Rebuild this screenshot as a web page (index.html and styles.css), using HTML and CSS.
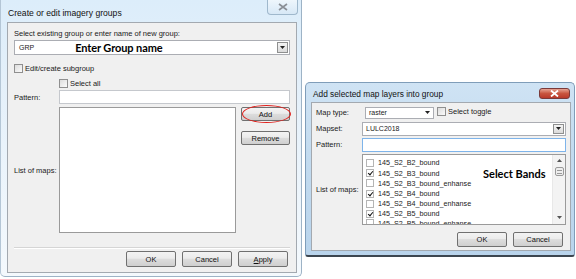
FILE: index.html
```html
<!DOCTYPE html>
<html lang="en">
<head>
    <title>Imagery groups</title>
    <meta charset="utf-8">
    <link rel="stylesheet" href="styles.css">
</head>
<body>
<div class="desk">
    <section class="win win-main">
        <div class="titlebar">
            <span class="title">Create or edit imagery groups</span>
            <span class="close close-idle">
                <svg width="10" height="8" viewBox="0 0 10 8"><path d="M1 1 L9 7 M9 1 L1 7" stroke="#8a8f96" stroke-width="1.6"/></svg>
            </span>
        </div>
        <div class="panel panel-main">
            <div class="lbl-top">Select existing group or enter name of new group:</div>
            <div class="combo combo-group">
                <span class="val">GRP</span>
                <span class="note note-group">Enter Group name</span>
                <span class="drop"><svg width="5" height="3" viewBox="0 0 5 3"><path d="M0 0 H5 L2.5 3 Z" fill="#222"/></svg></span>
            </div>
            <div class="check-row row-sub"><span class="box"></span>Edit/create subgroup</div>
            <div class="check-row row-all"><span class="box"></span>Select all</div>
            <div class="form-grid">
                <span class="lbl">Pattern:</span>
                <div class="input input-wide"></div>
                <span class="lbl lbl-list">List of maps:</span>
                <div class="listbox"></div>
                <div class="side-btns">
                    <div class="btn-wrap">
                        <button class="btn">Add</button>
                        <span class="ring"></span>
                    </div>
                    <button class="btn">Remove</button>
                </div>
            </div>
            <div class="sep"></div>
            <div class="btn-row">
                <button class="btn btn-foot">OK</button>
                <button class="btn btn-foot">Cancel</button>
                <button class="btn btn-foot"><u>A</u>pply</button>
            </div>
        </div>
    </section>

    <section class="win win-add">
        <div class="titlebar titlebar-add">
            <span class="title">Add selected map layers into group</span>
            <span class="close close-red">
                <svg width="9" height="7" viewBox="0 0 9 7"><path d="M1 0.5 L8 6.5 M8 0.5 L1 6.5" stroke="#fff" stroke-width="1.8"/></svg>
            </span>
        </div>
        <div class="panel panel-add">
            <div class="add-row row-type">
                <span class="lbl">Map type:</span>
                <div class="combo combo-type">
                    <span class="val">raster</span>
                    <span class="drop-plain"><svg width="5" height="3" viewBox="0 0 5 3"><path d="M0 0 H5 L2.5 3 Z" fill="#222"/></svg></span>
                </div>
                <div class="check-row"><span class="box"></span>Select toggle</div>
            </div>
            <div class="add-row row-mapset">
                <span class="lbl">Mapset:</span>
                <div class="combo combo-mapset">
                    <span class="val">LULC2018</span>
                    <span class="drop"><svg width="5" height="3" viewBox="0 0 5 3"><path d="M0 0 H5 L2.5 3 Z" fill="#222"/></svg></span>
                </div>
            </div>
            <div class="add-row row-pattern">
                <span class="lbl">Pattern:</span>
                <div class="input input-focus"></div>
            </div>
            <div class="add-row row-list">
                <span class="lbl lbl-list">List of maps:</span>
                <div class="maplist">
                    <div class="items">
                        <div class="item"><span class="box"></span>145_S2_B2_bound</div>
                        <div class="item"><span class="box on"></span>145_S2_B3_bound</div>
                        <div class="item"><span class="box"></span>145_S2_B3_bound_enhanse</div>
                        <div class="item"><span class="box on"></span>145_S2_B4_bound</div>
                        <div class="item"><span class="box"></span>145_S2_B4_bound_enhanse</div>
                        <div class="item"><span class="box on"></span>145_S2_B5_bound</div>
                        <div class="item item-cut"><span class="box"></span>145_S2_B5_bound_enhanse</div>
                    </div>
                    <span class="note note-bands">Select Bands</span>
                    <div class="scrollbar">
                        <span class="arrow"><svg width="5" height="3" viewBox="0 0 5 3"><path d="M0 3 H5 L2.5 0 Z" fill="#555"/></svg></span>
                        <span class="thumb"></span>
                        <span class="arrow arrow-down"><svg width="5" height="3" viewBox="0 0 5 3"><path d="M0 0 H5 L2.5 3 Z" fill="#555"/></svg></span>
                    </div>
                </div>
            </div>
            <div class="btn-row btn-row-add">
                <button class="btn btn-foot">OK</button>
                <button class="btn btn-foot">Cancel</button>
            </div>
        </div>
    </section>
</div>
</body>
</html>
```

FILE: styles.css
```css
:root {
    --panel-bg: #f0f0f0;
    --text-color: #1a1a1a;
    --field-border: #abadb3;
    --frame-light: #e4f0fa;
    --frame-blue: #c3dbef;
}

* {
    margin: 0;
    padding: 0;
    box-sizing: border-box;
}

body {
    font-family: 'Liberation Sans', Arial, sans-serif;
    font-size: 7.5px;
    color: var(--text-color);
    background: #fff;
    width: 576px;
    height: 279px;
    overflow: hidden;
}

.desk {
    display: flex;
    align-items: flex-start;
}

/* window frames */
.win {
    display: flex;
    flex-direction: column;
}

.win-main {
    width: 302px;
    height: 277px;
    padding: 0 4px 3px 6px;
    background: linear-gradient(#dcedfa, var(--frame-light) 30%, #f4f9fd);
    border-left: 1px solid #b4c6d6;
    border-right: 1px solid #9db3c6;
    border-bottom: 1px solid #9db3c6;
    border-radius: 0 0 5px 5px;
}

.win-add {
    width: 270px;
    height: 175px;
    margin: 82px 0 0 3px;
    padding: 0 3px 4px 5px;
    background: linear-gradient(#cfe3f4, var(--frame-blue) 40%, #b9d4ec);
    border: 1px solid #7f9db9;
    border-bottom: 2px solid #3c4650;
    border-radius: 5px 5px 3px 3px;
}

.titlebar {
    height: 22px;
    display: flex;
    align-items: flex-start;
    justify-content: space-between;
}

.titlebar-add {
    height: 19px;
}

.title {
    font-size: 8.6px;
    color: #111;
    padding-top: 8px;
    margin-left: 1px;
}

.titlebar-add .title {
    padding-top: 6px;
    margin-left: 2px;
    font-size: 8.3px;
}

.close {
    display: flex;
    align-items: center;
    justify-content: center;
}

.close-idle {
    width: 31px;
    height: 15px;
    margin-right: -1px;
    border: 1px solid #9fb8cc;
    border-top: none;
    border-radius: 0 0 4px 4px;
    background: linear-gradient(#eef6fc, #d7e8f6);
}

.close-red {
    width: 31px;
    height: 11px;
    margin-top: 5px;
    margin-right: 1px;
    border: 1px solid #7a3a3a;
    border-radius: 3px;
    background: linear-gradient(#e7a393, #c8553f 50%, #b8392a);
}

/* client area */
.panel {
    background: var(--panel-bg);
    border: 1px solid #a3a9b0;
    display: flex;
    flex-direction: column;
}

.panel-main {
    height: 251px;
    padding: 0 6px 4px 6px;
}

.panel-add {
    height: 150px;
    padding: 0 4px 3px 4px;
}

.lbl-top {
    margin-top: 6px;
    height: 10px;
    line-height: 10px;
}

.combo {
    position: relative;
    display: flex;
    align-items: center;
    background: #fff;
    border: 1px solid var(--field-border);
}

.combo-group {
    margin-top: 1px;
    height: 15px;
    padding-left: 4px;
}

.val {
    font-size: 7px;
}

.note {
    font-family: Lato, 'Open Sans', sans-serif;
    font-weight: 700;
    color: #000;
}

.note-group {
    font-size: 11px;
    margin-left: 41px;
    letter-spacing: -0.1px;
}

.drop {
    position: absolute;
    right: 1px;
    top: 1px;
    bottom: 1px;
    width: 11px;
    display: flex;
    align-items: center;
    justify-content: center;
    border: 1px solid #8e8f8f;
    background: linear-gradient(#f4f4f4, #dadada);
}

.drop-plain {
    position: absolute;
    right: 3px;
    top: 0;
    bottom: 0;
    display: flex;
    align-items: center;
}

.check-row {
    display: flex;
    align-items: center;
    gap: 2px;
    height: 10px;
}

.box {
    width: 9px;
    height: 9px;
    border: 1px solid #8f8f8f;
    background: linear-gradient(135deg, #dcdcdc, #fbfbfb);
    flex: none;
    position: relative;
}

.row-sub {
    margin-top: 8px;
}

.row-all {
    margin-top: 5px;
    margin-left: 45px;
}

.form-grid {
    margin-top: 2px;
    display: grid;
    grid-template-columns: 45px 177px 54px;
    grid-template-rows: 14px 126px;
    row-gap: 3px;
}

.lbl {
    display: flex;
    align-items: center;
}

.input {
    background: #fff;
    border: 1px solid #c5c8cd;
}

.input-wide {
    grid-column: 2 / 4;
}

.listbox {
    background: #fff;
    border: 1px solid #9a9a9a;
}

.side-btns {
    display: flex;
    flex-direction: column;
    gap: 10px;
    padding-left: 5px;
}

.btn-wrap {
    position: relative;
    display: flex;
}

.btn {
    font-family: inherit;
    font-size: 7.5px;
    color: #111;
    height: 14px;
    width: 100%;
    border: 1px solid #707070;
    border-radius: 2px;
    background: linear-gradient(#f3f3f3, #ebebeb 45%, #dddddd 50%, #cfcfcf);
}

.ring {
    position: absolute;
    left: 1px;
    right: -1px;
    top: -2px;
    bottom: -2px;
    border: 1.5px solid #e0201c;
    border-radius: 50%;
}

.sep {
    margin-top: 14px;
    height: 2px;
    border-top: 1px solid #d5d5d5;
    border-bottom: 1px solid #fff;
}

.btn-row {
    margin-top: 2px;
    display: flex;
    justify-content: flex-end;
    gap: 6px;
    padding-right: 2px;
}

.btn-foot {
    width: 50px;
    height: 16px;
}

/* add layers dialog */
.add-row {
    display: grid;
    grid-template-columns: 46px 1fr;
}

.row-type {
    margin-top: 4px;
    height: 12px;
    grid-template-columns: 46px 69px auto;
    column-gap: 3px;
}

.combo-type {
    padding-left: 3px;
}

.row-mapset {
    margin-top: 3px;
    height: 14px;
}

.combo-mapset {
    padding-left: 3px;
}

.row-pattern {
    margin-top: 2px;
    height: 14px;
}

.input-focus {
    border-color: #7eb4ea;
}

.row-list {
    margin-top: 2px;
    height: 71px;
}

.maplist {
    position: relative;
    background: #fff;
    border: 1px solid #9a9a9a;
    overflow: hidden;
}

.items {
    padding: 3px 0 0 3px;
}

.item {
    display: flex;
    align-items: center;
    gap: 4px;
    height: 10.2px;
    font-size: 7.2px;
}

.item-cut {
    height: 6px;
    align-items: flex-start;
    overflow: hidden;
}

.item .box {
    width: 8px;
    height: 8px;
    border-color: #b5b5b5;
    background: #fff;
}

.box.on::after {
    content: '';
    position: absolute;
    left: 2px;
    top: 0;
    width: 2px;
    height: 4px;
    border: solid #111;
    border-width: 0 1.3px 1.3px 0;
    transform: rotate(40deg);
}

.note-bands {
    position: absolute;
    left: 120px;
    top: 12px;
    font-size: 11px;
}

.scrollbar {
    position: absolute;
    right: 0;
    top: 0;
    bottom: 0;
    width: 13px;
    display: flex;
    flex-direction: column;
    justify-content: space-between;
    align-items: center;
    background: #f3f3f3;
    border-left: 1px solid #e8e8e8;
}

.arrow {
    height: 12px;
    display: flex;
    align-items: center;
}

.thumb {
    width: 9px;
    height: 9px;
    margin-bottom: 36px;
    border: 1px solid #9a9a9a;
    border-radius: 2px;
    background: repeating-linear-gradient(#eee 0 2px, #999 2px 3px);
    background-size: 5px 7px;
    background-position: center;
    background-repeat: no-repeat;
    background-color: #eee;
}

.btn-row-add {
    margin-top: 7px;
    padding-right: 3px;
}

.btn-row-add .btn-foot {
    height: 15px;
}
```
